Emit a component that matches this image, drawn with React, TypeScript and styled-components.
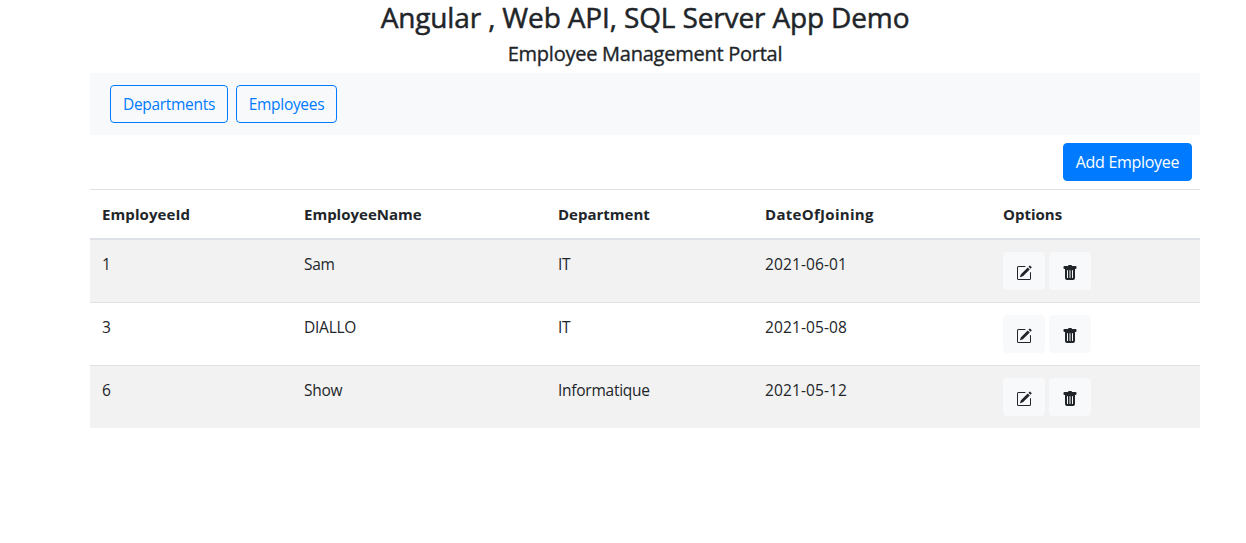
import React from "react";
import styled, { createGlobalStyle } from "styled-components";
import { BsPencilSquare, BsTrashFill } from "react-icons/bs";

const GlobalStyle = createGlobalStyle`
  *, *::before, *::after { box-sizing: border-box; }
  body {
    margin: 0;
    background: #fff;
    color: #212529;
    font-family: "Segoe UI", "Open Sans", "Noto Sans", sans-serif;
    font-size: 16px;
    line-height: 24px;
    overflow: hidden;
  }
`;

const Container = styled.main`
  width: 1110px;
  margin-left: 90px;
`;

const Title = styled.h3`
  margin: 0 0 8px;
  font-size: 28px;
  font-weight: 500;
  line-height: 34px;
  text-align: center;
  letter-spacing: -0.14px;
  -webkit-text-stroke: 0.5px currentColor;
  white-space: nowrap;
`;

const Subtitle = styled.h5`
  margin: 0 0 7px;
  font-size: 20px;
  font-weight: 500;
  line-height: 24px;
  text-align: center;
  letter-spacing: -0.25px;
  -webkit-text-stroke: 0.35px currentColor;
`;

const NavBar = styled.nav`
  display: flex;
  align-items: center;
  gap: 8px;
  height: 62px;
  padding: 0 20px;
  background: #f8f9fa;
`;

const Button = styled.button<{ $width: number; $solid?: boolean }>`
  width: ${(p) => p.$width}px;
  height: 38px;
  padding: 0;
  border: 1px solid #007bff;
  border-radius: 4px;
  background: ${(p) => (p.$solid ? "#007bff" : "transparent")};
  color: ${(p) => (p.$solid ? "#fff" : "#007bff")};
  font: inherit;
  font-size: ${(p) => (p.$solid ? 16 : 15.5)}px;
  letter-spacing: -0.3px;
  white-space: nowrap;
`;

const Actions = styled.div`
  display: flex;
  justify-content: flex-end;
  padding: 8px;
`;

const Table = styled.table`
  width: 100%;
  table-layout: fixed;
  border-collapse: collapse;
`;

const HeaderCell = styled.th<{ $spacing?: number }>`
  height: 49px;
  padding: 12px 12px 11px;
  border-top: 1px solid #dee2e6;
  border-bottom: 2px solid #dee2e6;
  font-size: 15px;
  font-weight: 700;
  letter-spacing: ${(p) => p.$spacing ?? 0}px;
  text-align: left;
  vertical-align: top;
`;

const Row = styled.tr`
  &:nth-of-type(odd) { background: #f2f2f2; }
`;

const Cell = styled.td<{ $date?: boolean }>`
  height: 63px;
  padding: 12px;
  border-top: 1px solid #dee2e6;
  font-size: 15.5px;
  letter-spacing: ${(p) => (p.$date ? 0.12 : -0.25)}px;
  vertical-align: top;
`;

const Options = styled.div`
  display: flex;
  gap: 4px;
`;

const IconButton = styled.button`
  display: flex;
  width: 42px;
  height: 38px;
  padding: 13px 13px 9px;
  border: 0;
  border-radius: 4px;
  background: #f8f9fa;
  color: #212529;

  svg { flex: none; width: 16px; height: 16px; }
`;

const columns = [
  { label: "EmployeeId", width: 202, spacing: 0.1 },
  { label: "EmployeeName", width: 254 },
  { label: "Department", width: 207 },
  { label: "DateOfJoining", width: 238, spacing: 0.3 },
  { label: "Options", width: 209 },
];

const employees = [
  { id: 1, name: "Sam", department: "IT", joined: "2021-06-01" },
  { id: 3, name: "DIALLO", department: "IT", joined: "2021-05-08" },
  { id: 6, name: "Show", department: "Informatique", joined: "2021-05-12" },
];

export default function App() {
  return (
    <>
      <GlobalStyle />
      <Container>
        <Title>Angular , Web API, SQL Server App Demo</Title>
        <Subtitle>Employee Management Portal</Subtitle>
        <NavBar>
          <Button $width={118}>Departments</Button>
          <Button $width={101}>Employees</Button>
        </NavBar>
        <Actions>
          <Button $width={129} $solid>Add Employee</Button>
        </Actions>
        <Table>
          <colgroup>
            {columns.map((c) => <col key={c.label} width={c.width} />)}
          </colgroup>
          <thead>
            <tr>
              {columns.map((c) => (
                <HeaderCell key={c.label} $spacing={c.spacing}>{c.label}</HeaderCell>
              ))}
            </tr>
          </thead>
          <tbody>
            {employees.map((e) => (
              <Row key={e.id}>
                <Cell>{e.id}</Cell>
                <Cell>{e.name}</Cell>
                <Cell>{e.department}</Cell>
                <Cell $date>{e.joined}</Cell>
                <Cell>
                  <Options>
                    <IconButton aria-label="Edit"><BsPencilSquare /></IconButton>
                    <IconButton aria-label="Delete"><BsTrashFill /></IconButton>
                  </Options>
                </Cell>
              </Row>
            ))}
          </tbody>
        </Table>
      </Container>
    </>
  );
}
